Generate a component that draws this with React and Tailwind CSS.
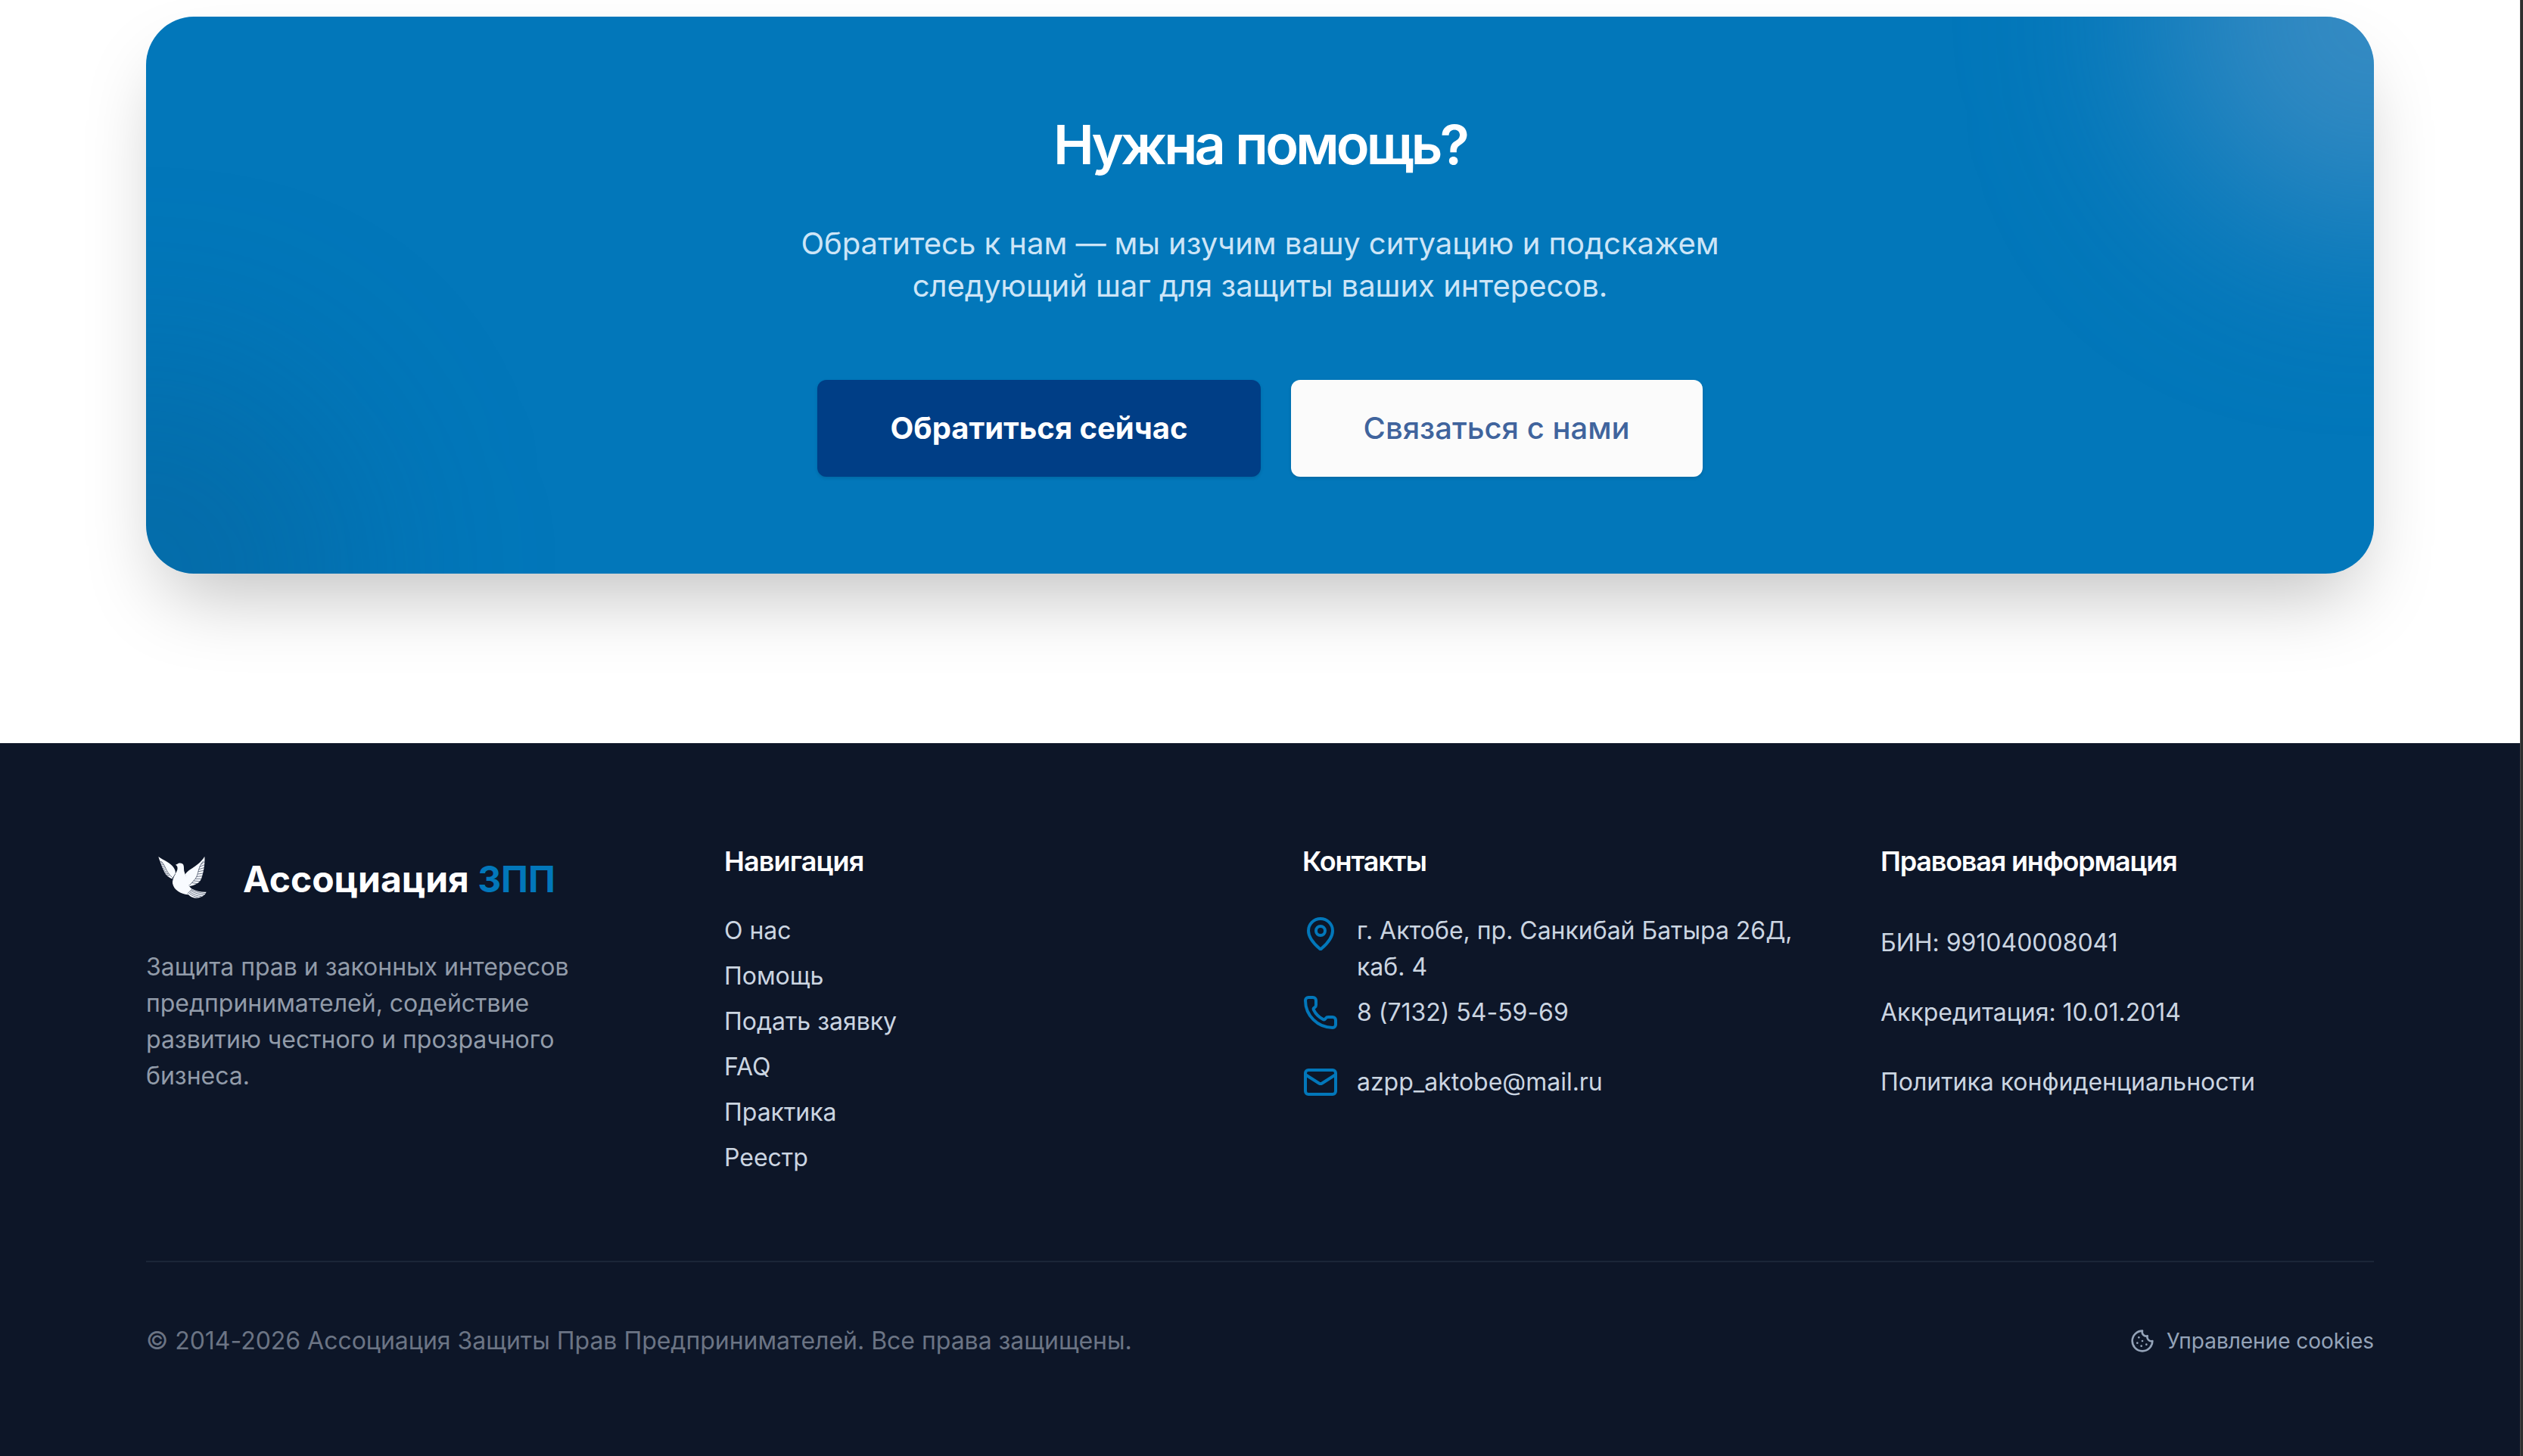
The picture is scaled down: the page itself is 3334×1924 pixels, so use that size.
import { Cookie, Mail, MapPin, Phone } from 'lucide-react'

const NAV = ['О нас', 'Помощь', 'Подать заявку', 'FAQ', 'Практика', 'Реестр']
const LEGAL = ['БИН: 991040008041', 'Аккредитация: 10.01.2014', 'Политика конфиденциальности']

function Dove() {
  return (
    <svg viewBox="9 0 288 288" className="size-24 shrink-0" aria-hidden="true">
      <g fill="#f8fbff">
        <path d="M58 66 C78 80 108 92 119 110 C126 120 127 130 124 136 C121 143 116 148 112 154 C102 150 88 142 80 124 C72 106 64 86 58 66 Z" />
        <path d="M164 136 C176 118 198 110 213 97 C226 86 235 76 241 65 C243 92 238 124 230 148 C224 170 208 178 180 184 Z" />
        <path d="M126 98 L133 95 C139 90 152 90 157 98 C161 108 157 118 162 130 C166 146 180 158 179 176 C179 186 188 190 192 196 L175 217 C146 214 120 200 114 172 C112 150 128 134 133 118 C135 108 133 102 126 98 Z" />
        <path d="M182 189 C202 200 222 207 248 206 C242 222 220 231 203 230 C190 228 180 222 174 213 Z" />
      </g>
      <g fill="none" stroke="#27324a" strokeWidth="2" strokeLinecap="round">
        <path d="M70 86 C86 98 84 122 112 148" />
        <path d="M64 84 L73 90 M67 94 L78 99 M71 103 L82 108 M75 112 L85 117 M79 121 L90 126 M84 130 L96 134 M91 138 L101 141" />
        <path d="M236 84 C214 104 218 138 204 154 C196 164 188 172 181 180" />
        <path d="M241 86 L228 96 M241 98 L222 106 M239 110 L219 116 M237 121 L217 125 M235 132 L215 135 M232 143 L211 145 M228 154 L206 154 M223 164 L199 162 M214 173 L192 170" />
        <path d="M124 136 C118 144 114 154 113 164" />
        <path d="M192 194 L174 212" />
        <path d="M191 198 C208 206 224 210 244 212 M188 202 C204 212 220 216 238 218 M184 207 C198 217 212 222 228 224 M180 211 C190 220 202 225 214 228" />
      </g>
    </svg>
  )
}

function Heading({ className, children }) {
  return <h3 className={`mb-10 text-4xl leading-[56px] font-semibold whitespace-nowrap text-white ${className}`}>{children}</h3>
}

function HelpCard() {
  return (
    <section className="relative h-[736px] overflow-hidden rounded-[64px] bg-[#0277ba] pt-32 text-center">
      <div className="absolute -top-[280px] -right-[280px] size-[560px] rounded-full bg-[#75a5cf]/45 blur-[128px]" />
      <div className="absolute -bottom-[280px] -left-[280px] size-[560px] rounded-full bg-[#0a4a78]/25 blur-[128px]" />
      <div className="relative">
        <h2 className="mb-[62px] text-7xl leading-[82px] font-semibold tracking-[-3.8px] text-white [word-spacing:2px]">
          Нужна помощь?
        </h2>
        <p className="mb-24 text-[40px] leading-14 tracking-[-0.02px] text-[#cde5f7]">
          Обратитесь к нам — мы изучим вашу ситуацию и подскажем
          <br />
          следующий шаг для защиты ваших интересов.
        </p>
        <div className="flex justify-center gap-10 text-[40px]">
          <button className="h-32 rounded-xl bg-[#003e86] px-24 font-bold text-white shadow-[0_2px_4px_rgba(0,0,0,0.12)]">
            Обратиться сейчас
          </button>
          <button className="h-32 rounded-xl bg-[#fbfbfb] px-24 font-medium text-[#40649d] shadow-[0_2px_4px_rgba(0,0,0,0.12)]">
            Связаться с нами
          </button>
        </div>
      </div>
    </section>
  )
}

function Footer() {
  return (
    <footer className="h-[942px] bg-[#0d1628] px-[193px] pt-32 text-[32px] leading-12 tracking-[-0.02px]">
      <div className="grid grid-cols-4 gap-28">
        <div>
          <div className="mb-12 flex items-center gap-8">
            <Dove />
            <div className="pt-2 text-5xl leading-14 font-bold whitespace-nowrap text-white">
              Ассоциация <span className="text-[#0277ba]">ЗПП</span>
            </div>
          </div>
          <p className="text-[#919ba9]">
            Защита прав и законных интересов
            <br />
            предпринимателей, содействие
            <br />
            развитию честного и прозрачного
            <br />
            бизнеса.
          </p>
        </div>
        <div>
          <Heading className="tracking-[-0.85px]">Навигация</Heading>
          <ul className="flex flex-col gap-3 text-[#cbd5e1]">
            {NAV.map((item) => (
              <li key={item}>{item}</li>
            ))}
          </ul>
        </div>
        <div>
          <Heading className="tracking-[-1.15px]">Контакты</Heading>
          <ul className="flex flex-col gap-3 text-[#cbd5e1]">
            <li className="flex h-20 items-start gap-6">
              <MapPin className="mt-1 size-12 shrink-0 text-[#0277ba]" />
              <span>
                г. Актобе, пр. Санкибай Батыра 26Д,
                <br />
                каб. 4
              </span>
            </li>
            <li className="flex h-20 items-center gap-6">
              <Phone className="size-12 shrink-0 text-[#0277ba]" />
              8 (7132) 54-59-69
            </li>
            <li className="flex h-20 items-center gap-6">
              <Mail className="size-12 shrink-0 text-[#0277ba]" />
              azpp_aktobe@mail.ru
            </li>
          </ul>
        </div>
        <div>
          <Heading className="tracking-[-1.2px]">Правовая информация</Heading>
          <ul className="flex flex-col gap-3 text-[#cbd5e1]">
            {LEGAL.map((item) => (
              <li key={item} className="flex h-20 items-center whitespace-nowrap">
                {item}
              </li>
            ))}
          </ul>
        </div>
      </div>
      <div className="mt-28 flex items-center justify-between border-t-2 border-[#1b2638] pt-20">
        <p className="text-[#6b7484]">© 2014-2026 Ассоциация Защиты Прав Предпринимателей. Все права защищены.</p>
        <button className="flex items-center gap-4 text-[28px] leading-10 text-[#94a3b8]">
          <Cookie className="size-8" />
          Управление cookies
        </button>
      </div>
    </footer>
  )
}

export default function App() {
  return (
    <div className="flex h-[1924px] w-[3334px] overflow-hidden bg-white font-['Inter',sans-serif]">
      <main className="w-[3330px] shrink-0">
        <div className="h-[982px] overflow-hidden px-[193px] pt-[22px]">
          <div className="rounded-[64px] shadow-[0_50px_100px_-24px_rgba(0,0,0,0.25)]">
            <HelpCard />
          </div>
        </div>
        <Footer />
      </main>
      <div className="w-1 shrink-0 border-l border-[#484848] bg-[#2e2e2e]" />
    </div>
  )
}
